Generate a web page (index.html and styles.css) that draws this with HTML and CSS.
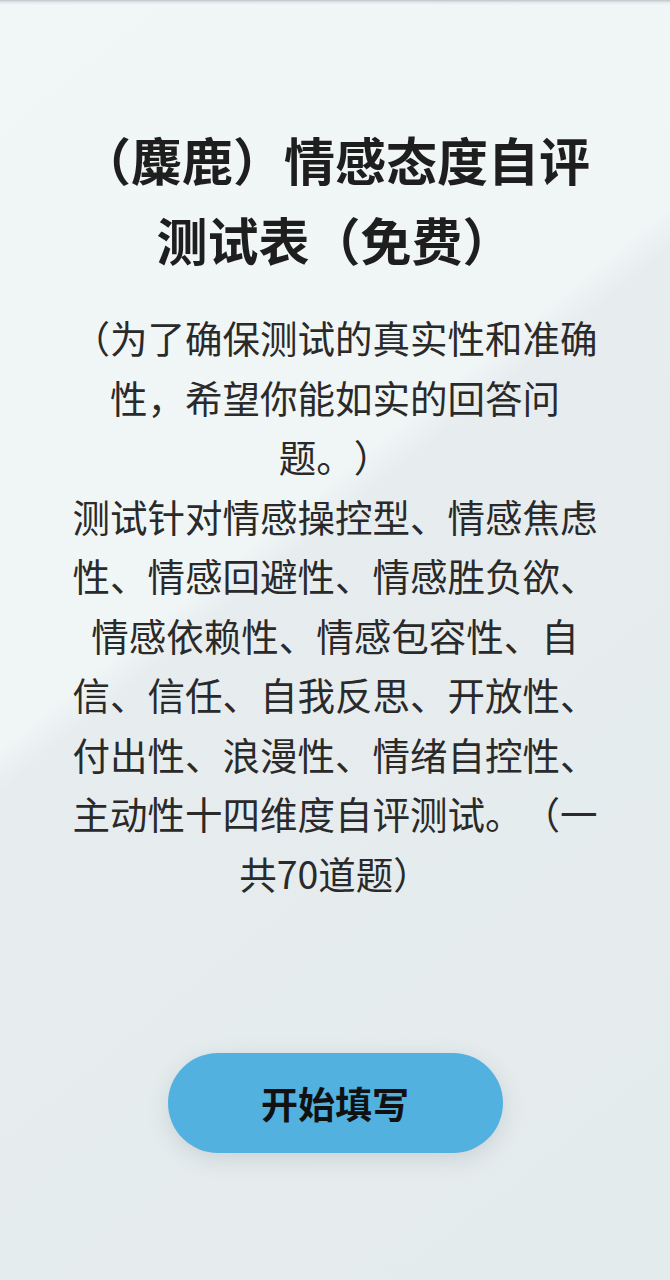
FILE: index.html
```html
<!DOCTYPE html>
<html lang="zh-CN">
<head>
<meta charset="utf-8">
<title>情感态度自评测试表</title>
<link rel="stylesheet" href="styles.css">
</head>
<body>
<div class="page">
  <div class="topshade"></div>
  <h1 class="title">（麋鹿）情感态度自评测试表（免费）</h1>
  <p class="desc">（为了确保测试的真实性和准确性，希望你能如实的回答问题。）<br>测试针对情感操控型、情感焦虑性、情感回避性、情感胜负欲、情感依赖性、情感包容性、自信、信任、自我反思、开放性、付出性、浪漫性、情绪自控性、主动性十四维度自评测试。（一共70道题）</p>
  <button class="start">开始填写</button>
</div>
</body>
</html>
```
FILE: styles.css
```css
html, body {
  margin: 0;
  padding: 0;
}
body {
  font-family: "Noto Sans CJK SC", "Noto Sans", sans-serif;
  color: #222;
}
.page {
  position: relative;
  min-height: 1280px;
  box-sizing: border-box;
  display: flex;
  flex-direction: column;
  align-items: center;
  padding-top: 119px;
  background: linear-gradient(141deg, #f1f6f7 0%, #f0f5f6 41%, #e7edef 43.5%, #e4ebed 100%);
}
.topshade {
  position: absolute;
  left: 0;
  right: 0;
  top: 0;
  height: 5px;
  background: linear-gradient(180deg, rgba(150,160,165,0.55) 0%, rgba(200,208,212,0.3) 50%, rgba(241,246,247,0) 100%);
}
.title {
  width: 540px;
  margin: 0;
  font-size: 51px;
  line-height: 80px;
  font-weight: 700;
  text-align: center;
  color: #1e1e1e;
  text-spacing-trim: space-all;
}
.desc {
  width: 540px;
  margin: 28px 0 0;
  font-size: 37.5px;
  line-height: 59.5px;
  font-weight: 400;
  text-align: center;
  color: #2a2a2a;
  text-spacing-trim: space-all;
}
.start {
  margin-top: 151px;
  width: 335px;
  height: 100px;
  border: none;
  border-radius: 50px;
  background: #52b1df;
  color: #111;
  font-family: "Noto Sans CJK SC", "Noto Sans", sans-serif;
  font-size: 37px;
  font-weight: 700;
  box-shadow: 0 6px 22px rgba(60, 80, 90, 0.16);
  cursor: pointer;
}
```
